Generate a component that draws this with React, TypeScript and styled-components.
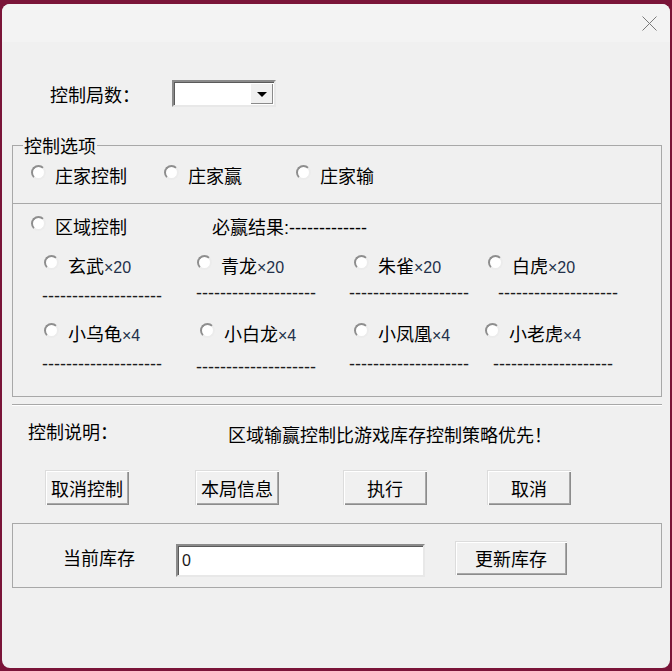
import React from 'react';
import styled, { createGlobalStyle } from 'styled-components';

const cjk = `"Noto Sans CJK SC", "Noto Sans", sans-serif`;
const latin = `"Liberation Sans", Arial, sans-serif`;

const GlobalStyle = createGlobalStyle`
  html, body { margin: 0; padding: 0; background: #7a1438; }
  body { font-family: ${cjk}; }
  #root { height: 671px; overflow: hidden; }
  * { box-sizing: border-box; }
`;

const Window = styled.div`
  margin: 4px 2px 0 2px;
  height: 664px;
  border-radius: 8px;
  background: #f0f0f0;
  overflow: hidden;
  display: flex;
  flex-direction: column;
`;

const TitleBar = styled.div`
  height: 38px;
  background: #f3f3f3;
  display: flex;
  align-items: center;
  justify-content: flex-end;
  padding-right: 13px;
`;

const Content = styled.div`
  padding: 0 8px 0 10px;
  display: flex;
  flex-direction: column;
  color: #000;
  font-size: 18px;
  line-height: 22px;
`;

const TopRow = styled.div`
  margin-top: 38px;
  height: 27px;
  display: flex;
  align-items: center;
`;

const Label = styled.div<{ $w?: number; $pl?: number; $mt?: number }>`
  width: ${(p) => (p.$w ? `${p.$w}px` : 'auto')};
  padding-left: ${(p) => p.$pl ?? 0}px;
  margin-top: ${(p) => p.$mt ?? 0}px;
  font-family: ${cjk};
  font-size: 18px;
  line-height: 22px;
  white-space: nowrap;
`;

const Combo = styled.div`
  width: 104px;
  height: 27px;
  background: #fff;
  border: 2px solid;
  border-color: #8a8a8a #e8e8e8 #e8e8e8 #8a8a8a;
  box-shadow: inset 1px 1px 0 #5a5a5a;
  display: flex;
  justify-content: flex-end;
  padding: 1px;
`;

const ComboButton = styled.div`
  width: 23px;
  height: 100%;
  background: #f0f0f0;
  box-shadow: inset 1px 1px 0 #fff, inset -1px -1px 0 #8a8a8a;
  display: flex;
  align-items: center;
  justify-content: center;
`;

const Arrow = styled.div`
  width: 0;
  height: 0;
  border-left: 5px solid transparent;
  border-right: 5px solid transparent;
  border-top: 5px solid #000;
  margin-top: 1px;
`;

const Group = styled.fieldset`
  margin: 28px 0 0 0;
  padding: 0;
  min-width: 0;
  border: 1px solid #a8a8a8;
`;

const Legend = styled.legend`
  margin-left: 10px;
  padding: 0 1px;
  font-family: ${cjk};
  font-size: 18px;
  line-height: 20px;
`;

const DealerRow = styled.div`
  height: 48px;
  padding: 9px 0 0 18px;
  display: flex;
  align-items: flex-start;
`;

const AreaSection = styled.div`
  height: 193px;
  border-top: 1px solid #a8a8a8;
  padding: 11px 0 0 18px;
  display: flex;
  flex-direction: column;
`;

const AreaRow = styled.div`
  display: flex;
  align-items: flex-start;
`;

const Slot = styled.div<{ $w: number }>`
  width: ${(p) => p.$w}px;
  flex: none;
  display: flex;
`;

const RadioItem = styled.label<{ $ml?: number }>`
  display: flex;
  width: max-content;
  align-items: center;
  gap: 9px;
  height: 22px;
  margin-left: ${(p) => p.$ml ?? 0}px;
  font-family: ${cjk};
  font-size: 18px;
  line-height: 22px;
  white-space: nowrap;
`;

const RadioCircle = styled.span`
  width: 15px;
  height: 15px;
  flex: none;
  border-radius: 50%;
  background: #fff;
  border: 2px solid;
  border-color: #8e8e8e #ececec #ececec #8e8e8e;
  margin-bottom: 5px;
`;

const Mult = styled.span`
  font-family: ${latin};
  font-size: 16px;
  line-height: 1;
  color: #23304a;
`;

const Dashes = styled.span`
  font-family: ${latin};
  font-size: 18px;
  line-height: 1;
`;

const Grid = styled.div`
  margin-top: 17px;
  margin-left: 11px;
  display: grid;
  grid-template-columns: 154px 153px 136px auto;
  row-gap: 16px;
  align-items: start;
`;

const Cell = styled.div`
  display: flex;
  flex-direction: column;
  align-items: flex-start;
`;

const DashLine = styled.div<{ $dy: number; $ml: number }>`
  margin-top: ${(p) => 7 + p.$dy}px;
  margin-left: ${(p) => p.$ml}px;
  height: 20px;
  font-family: ${latin};
  font-size: 18px;
  line-height: 20px;
  color: #1c1c1c;
  white-space: nowrap;
`;

const Separator = styled.div`
  margin-top: 7px;
  height: 2px;
  border-top: 1px solid #a8a8a8;
  border-bottom: 1px solid #fff;
`;

const DescRow = styled.div`
  margin-top: 14px;
  height: 25px;
  display: flex;
  align-items: flex-start;
`;

const ButtonRow = styled.div`
  margin-top: 25px;
  padding-left: 33px;
  display: grid;
  grid-template-columns: 150px 148px 144px 84px;
`;

const Button = styled.button<{ $w: number; $h: number; $mt?: number; $ml?: number }>`
  width: ${(p) => p.$w}px;
  height: ${(p) => p.$h}px;
  margin-top: ${(p) => p.$mt ?? 0}px;
  margin-left: ${(p) => p.$ml ?? 0}px;
  padding: 0;
  border: none;
  background: #f0f0f0;
  box-shadow: inset 1px 1px 0 #dcdcdc, inset 2px 2px 0 #fff, inset -1px -1px 0 #8c8c8c,
    inset -2px -2px 0 #a8a8a8;
  font-family: ${cjk};
  font-size: 18px;
  line-height: 22px;
  color: #000;
  flex: none;
`;

const StockBox = styled.div`
  margin-top: 18px;
  height: 65px;
  border: 1px solid #a8a8a8;
  display: flex;
  align-items: flex-start;
`;

const Input = styled.div`
  width: 249px;
  height: 33px;
  margin-top: 20px;
  flex: none;
  background: #fff;
  border: 2px solid;
  border-color: #8a8a8a #e8e8e8 #e8e8e8 #8a8a8a;
  box-shadow: inset 1px 1px 0 #5a5a5a;
  padding: 0 0 0 4px;
  display: flex;
  align-items: center;
  font-family: ${latin};
  font-size: 16px;
  color: #1a1a1a;
`;

function CloseIcon() {
  return (
    <svg width="15" height="15" viewBox="0 0 15 15">
      <path d="M0.5 0.5 L14.5 14.5 M14.5 0.5 L0.5 14.5" stroke="#7a7a7a" strokeWidth="1" fill="none" />
    </svg>
  );
}

type Region = {
  name: string;
  mult: string;
  radioMl: number;
  dashMl: number;
  dy: number;
};

const regions: Region[] = [
  { name: '玄武', mult: '×20', radioMl: 2, dashMl: 0, dy: 3 },
  { name: '青龙', mult: '×20', radioMl: 1, dashMl: 0, dy: 0 },
  { name: '朱雀', mult: '×20', radioMl: 5, dashMl: 0, dy: 0 },
  { name: '白虎', mult: '×20', radioMl: 3, dashMl: 13, dy: 0 },
  { name: '小乌龟', mult: '×4', radioMl: 2, dashMl: 0, dy: 3 },
  { name: '小白龙', mult: '×4', radioMl: 4, dashMl: 0, dy: 6 },
  { name: '小凤凰', mult: '×4', radioMl: 5, dashMl: 0, dy: 3 },
  { name: '小老虎', mult: '×4', radioMl: 0, dashMl: 8, dy: 3 },
];

const DASH20 = '--------------------';

export default function App() {
  return (
    <>
      <GlobalStyle />
      <Window>
        <TitleBar>
          <CloseIcon />
        </TitleBar>
        <Content>
          <TopRow>
            <Label $w={160} $pl={38}>控制局数：</Label>
            <Combo>
              <ComboButton>
                <Arrow />
              </ComboButton>
            </Combo>
          </TopRow>

          <Group>
            <Legend>控制选项</Legend>
            <DealerRow>
              <Slot $w={133}>
                <RadioItem>
                  <RadioCircle />
                  庄家控制
                </RadioItem>
              </Slot>
              <Slot $w={132}>
                <RadioItem>
                  <RadioCircle />
                  庄家赢
                </RadioItem>
              </Slot>
              <Slot $w={120}>
                <RadioItem>
                  <RadioCircle />
                  庄家输
                </RadioItem>
              </Slot>
            </DealerRow>
            <AreaSection>
              <AreaRow>
                <Slot $w={181}>
                  <RadioItem>
                    <RadioCircle />
                    区域控制
                  </RadioItem>
                </Slot>
                <Label>
                  必赢结果<Dashes>:-------------</Dashes>
                </Label>
              </AreaRow>
              <Grid>
                {regions.map((r) => (
                  <Cell key={r.name}>
                    <RadioItem $ml={r.radioMl}>
                      <RadioCircle />
                      <span>
                        {r.name}
                        <Mult>{r.mult}</Mult>
                      </span>
                    </RadioItem>
                    <DashLine $dy={r.dy} $ml={r.dashMl}>
                      {DASH20}
                    </DashLine>
                  </Cell>
                ))}
              </Grid>
            </AreaSection>
          </Group>

          <Separator />

          <DescRow>
            <Label $w={216} $pl={16}>控制说明：</Label>
            <Label $mt={3}>区域输赢控制比游戏库存控制策略优先！</Label>
          </DescRow>

          <ButtonRow>
            <Button $w={84} $h={35}>取消控制</Button>
            <Button $w={84} $h={35}>本局信息</Button>
            <Button $w={84} $h={35}>执行</Button>
            <Button $w={84} $h={35}>取消</Button>
          </ButtonRow>

          <StockBox>
            <Label $w={163} $pl={50} $mt={22}>当前库存</Label>
            <Input>0</Input>
            <Button $w={112} $h={34} $mt={17} $ml={30}>更新库存</Button>
          </StockBox>
        </Content>
      </Window>
    </>
  );
}
